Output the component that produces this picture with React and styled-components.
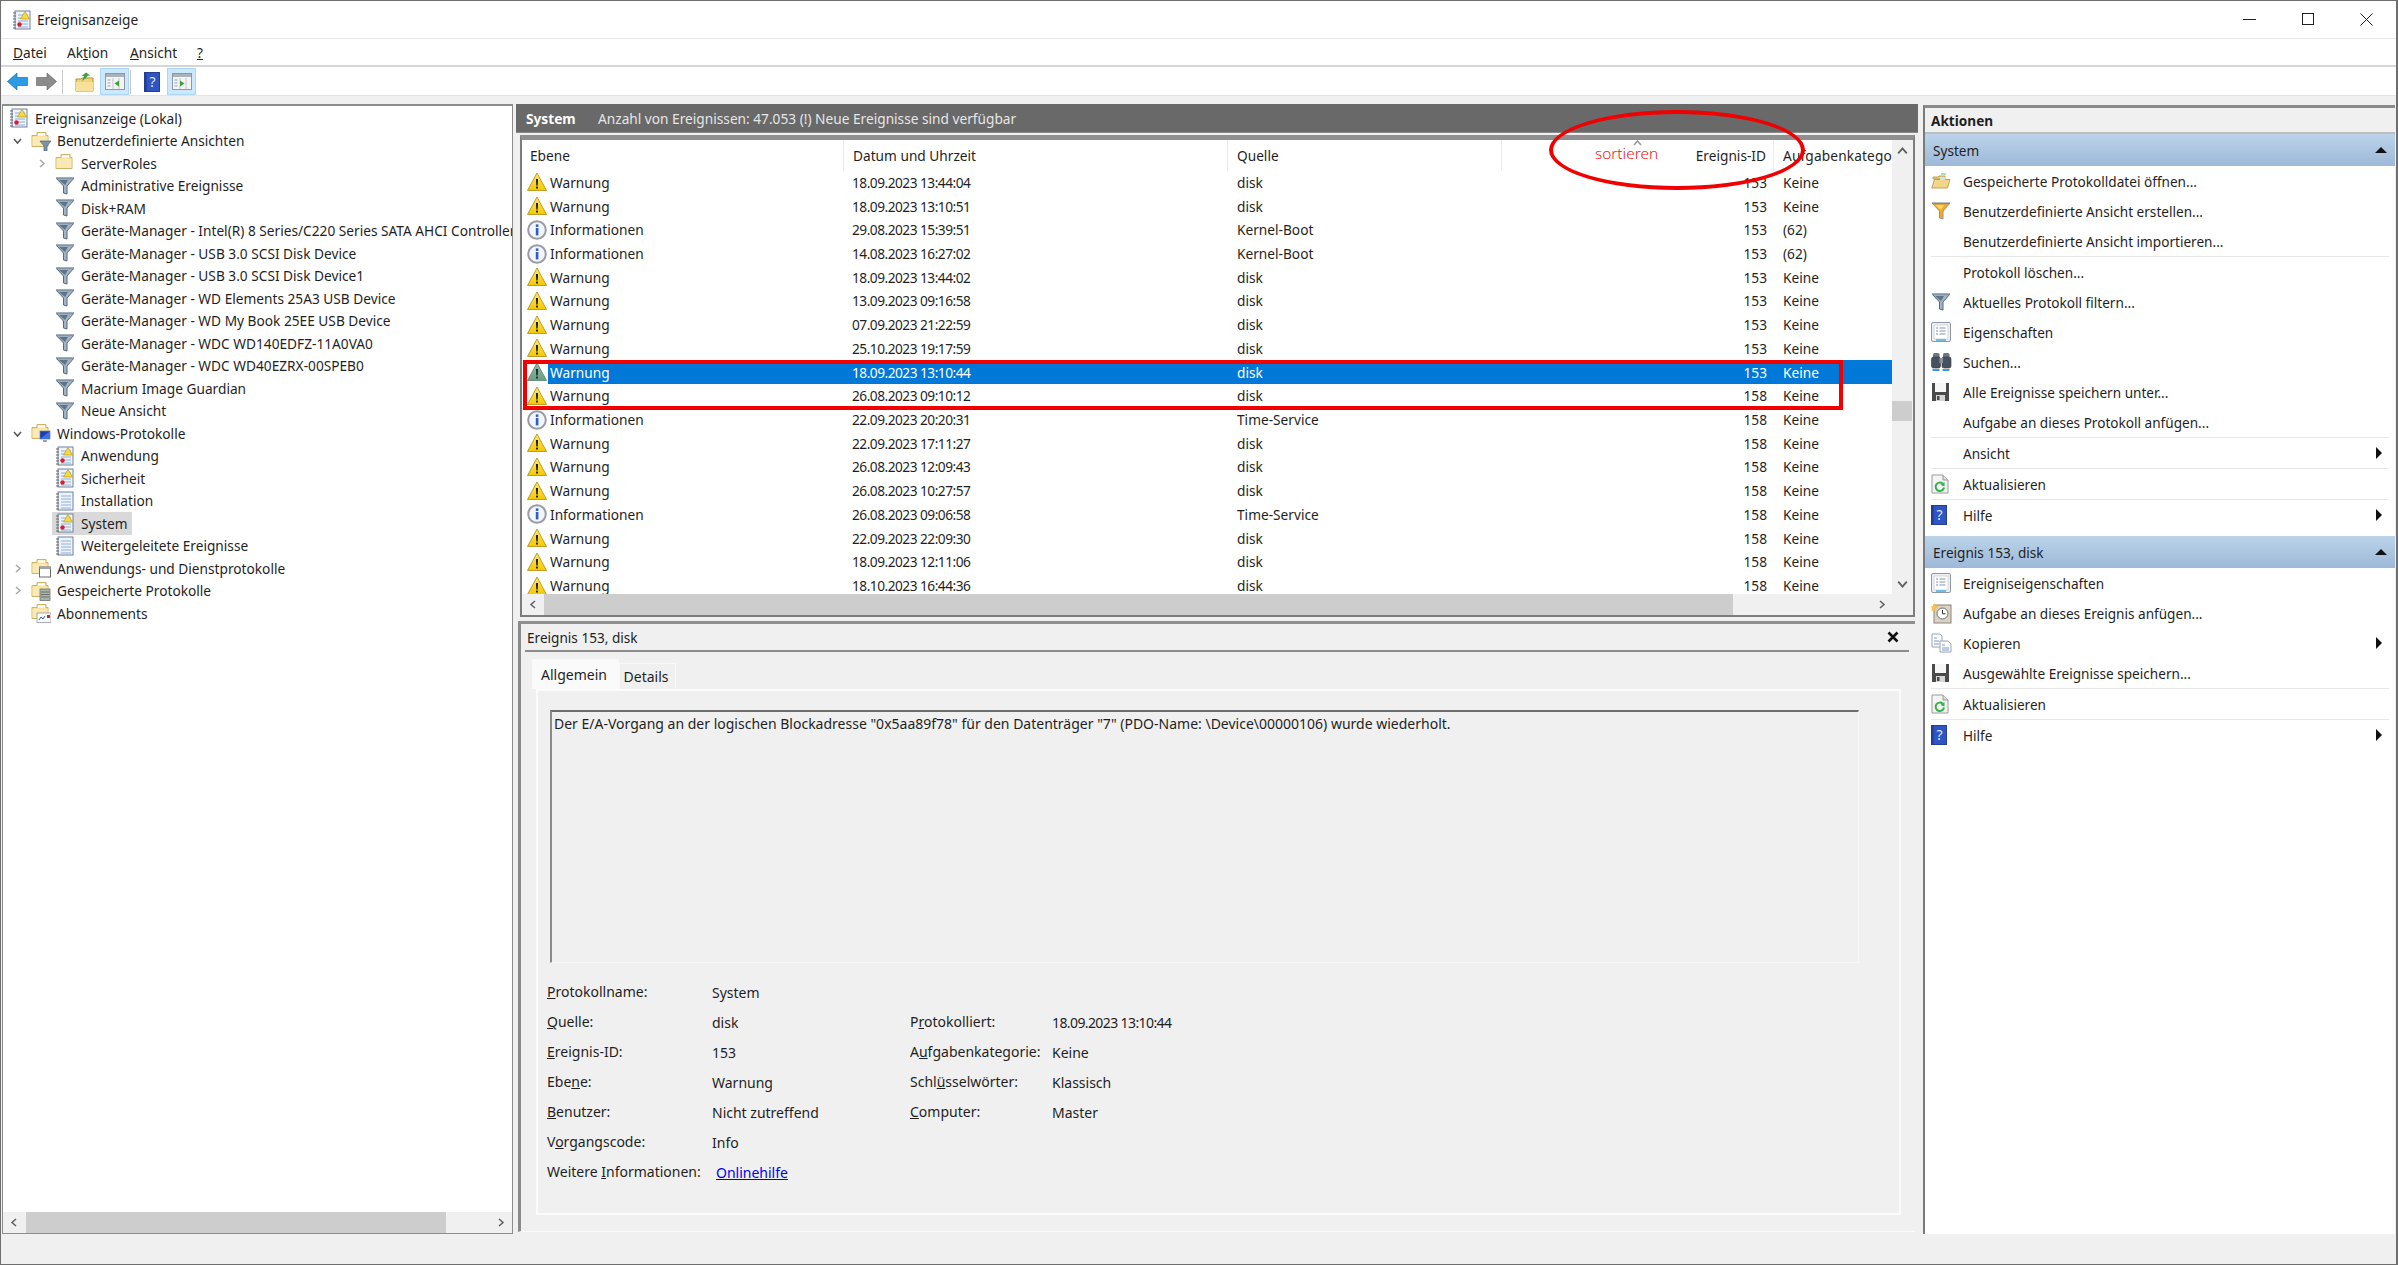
import React from "react";
import styled, { createGlobalStyle } from "styled-components";

const GlobalStyle = createGlobalStyle`
  html, body, #root { margin: 0; padding: 0; width: 100%; height: 100%; }
  body { overflow: hidden; background: #f0f0f0; color: #1f1f1f; font-family: "Noto Sans", "Open Sans", sans-serif; font-size: 13.7px; }
  * { box-sizing: border-box; }
`;

/* ---------- icons ---------- */

function LogIcon({ alert, size = 20 }) {
  return (
    <svg width={size} height={size} viewBox="0 0 20 20">
      <rect x="3" y="1" width="15" height="18" fill="#eef3fb" stroke="#6f839f" />
      <path d="M1 3h3M1 6h3M1 9h3M1 12h3M1 15h3M1 18h3" stroke="#666" strokeWidth="1.2" />
      <path d="M6 5h10M6 8h10M6 11h10M6 14h10M6 17h10" stroke="#8fb0d8" strokeWidth="1" />
      {alert && <polygon points="13,1.5 17.5,9 8.5,9" fill="#fbd93c" stroke="#b99a1f" strokeWidth="0.7" />}
      {alert && <circle cx="7.5" cy="14.5" r="2.2" fill="#d3202f" />}
    </svg>
  );
}

function FolderIcon({ kind }) {
  return (
    <svg width="20" height="20" viewBox="0 0 20 20">
      <path d="M1 4.5h5l0-3h9v3h2v11H1z" fill="#f7e3a0" stroke="#c9ab58" strokeWidth="0.9" />
      <path d="M7 2.5h7v2H7z" fill="#fff" />
      <path d="M1.5 6h15v9h-15z" fill="#f9e9b4" />
      {kind === "filter" && (
        <polygon points="9,10 20,10 16,15 16,20 13,20 13,15" fill="#7d93a8" stroke="#4f6477" strokeWidth="0.7" />
      )}
      {kind === "monitor" && (
        <g>
          <rect x="9" y="8" width="10" height="8" fill="#1b3db0" stroke="#6a7f9c" strokeWidth="0.7" />
          <path d="M12 17h4v2h-4z" fill="#9aa4b2" />
          <path d="M9 16L19 8v8z" fill="#3f6fe0" />
        </g>
      )}
      {kind === "window" && (
        <g>
          <rect x="8.5" y="9" width="11" height="10" fill="#fff" stroke="#6d6d6d" />
          <path d="M8.5 9h11v2h-11z" fill="#9aa4b2" />
        </g>
      )}
      {kind === "logs" && (
        <g>
          <rect x="9" y="8" width="10" height="11.5" fill="#a8b2a8" stroke="#6b746f" strokeWidth="0.8" />
          <path d="M10 11h8M10 13.5h8M10 16h8" stroke="#6b746f" />
        </g>
      )}
      {kind === "subs" && (
        <g>
          <rect x="6" y="10" width="14" height="9.5" fill="#fff" stroke="#8f9aa8" strokeWidth="0.8" />
          <path d="M8 17l2-3 2 2 2-3" stroke="#2a5fc0" fill="none" />
          <rect x="16" y="12" width="3" height="3" fill="#d3202f" />
        </g>
      )}
    </svg>
  );
}

function Funnel({ orange }) {
  return (
    <svg width="20" height="20" viewBox="0 0 20 20">
      <polygon
        points="1,2 19,2 12,10 12,18 8.5,17 8.5,10"
        fill={orange ? "#f6a91f" : "#a3b5c5"}
        stroke={orange ? "#8a95a0" : "#566b7d"}
        strokeWidth="1"
      />
      <polygon points="4,4 13,4 10,9" fill={orange ? "#ffd35e" : "#5e7488"} />
      <path d="M1 2.5h18" stroke={orange ? "#7f8d9a" : "#7f95a8"} strokeWidth="1.4" />
    </svg>
  );
}

function WarningIcon({ selected }) {
  const id = selected ? "warnSel" : "warn";
  return (
    <svg width="20" height="20" viewBox="0 0 20 20">
      <defs>
        <linearGradient id={id} x1="0" y1="0" x2="0" y2="1">
          <stop offset="0" stopColor={selected ? "#8fb8a0" : "#ffe96a"} />
          <stop offset="1" stopColor={selected ? "#6c9e86" : "#f4c800"} />
        </linearGradient>
      </defs>
      <polygon points="10,1 19.5,18.5 0.5,18.5" fill={`url(#${id})`} stroke={selected ? "#5f8a76" : "#b4951c"} strokeWidth="0.9" />
      <path d="M9 7h2l-.3 6.5h-1.4z" fill={selected ? "#123" : "#111"} />
      <rect x="9.1" y="14.6" width="1.8" height="1.9" fill={selected ? "#123" : "#111"} />
    </svg>
  );
}

function InfoIcon() {
  return (
    <svg width="20" height="20" viewBox="0 0 20 20">
      <circle cx="10" cy="10" r="8.8" fill="#f2f5fb" stroke="#9a9ca2" strokeWidth="2" />
      <rect x="8.8" y="8" width="2.6" height="7.4" fill="#2b5dc4" />
      <rect x="8.8" y="4.4" width="2.6" height="2.5" fill="#2b5dc4" />
    </svg>
  );
}

function HelpIcon({ w = 16, h = 20 }) {
  return (
    <svg width={w} height={h} viewBox="0 0 16 20">
      <rect x="0.5" y="0.5" width="15" height="19" fill="#2f55c4" stroke="#27408c" />
      <rect x="0.5" y="0.5" width="2" height="19" fill="#1f3c96" />
      <text x="8.5" y="15" fontSize="14" fontFamily="Noto Sans, sans-serif" fill="#dfe6ff" textAnchor="middle">?</text>
    </svg>
  );
}

function PaneToggle({ mirrored }) {
  return (
    <svg width="20" height="17" viewBox="0 0 20 17">
      <rect x="0.5" y="0.5" width="19" height="16" fill="#f4f4f4" stroke="#8f98a0" />
      <path d="M1 1h18v3H1z" fill="#aab3bb" />
      <path d="M8 5v11M14 5v11" stroke="#c2c8ce" />
      {mirrored ? (
        <polygon points="8,7.5 12.5,10.5 8,13.5" fill="#3aa33a" />
      ) : (
        <polygon points="14,7.5 9.5,10.5 14,13.5" fill="#3aa33a" />
      )}
      <path d="M2.5 7h3M2.5 10h3M2.5 13h3" stroke="#8fa6bd" />
    </svg>
  );
}

function FolderUp() {
  return (
    <svg width="20" height="20" viewBox="0 0 20 20">
      <path d="M1 7h5l1-1h11v13H1z" fill="#f0d278" stroke="#b1923f" />
      <path d="M1 10h17v9H1z" fill="#f7e19b" />
      <path d="M7 9l2-5H6.5L11 0.5l4.5 3H13l-2 2.5c-1 1-3 2-4 3z" fill="#3fa23a" />
    </svg>
  );
}

function NavArrow({ gray }) {
  return (
    <svg width="21" height="19" viewBox="0 0 21 19">
      {gray ? (
        <polygon points="20.5,9.5 11,1 11,5.5 0.5,5.5 0.5,13.5 11,13.5 11,18" fill="#8b8b8b" stroke="#6f6f6f" strokeWidth="0.7" />
      ) : (
        <polygon points="0.5,9.5 10,1 10,5.5 20.5,5.5 20.5,13.5 10,13.5 10,18" fill="#2b9be6" stroke="#1d6fb5" strokeWidth="0.7" />
      )}
    </svg>
  );
}

function Chevron({ dir = "right", color = "#5f5f5f", size = 9 }) {
  const paths = {
    right: "M3 1l4 3.5L3 8",
    left: "M6 1L2 4.5 6 8",
    up: "M1 6l3.5-4L8 6",
    down: "M1 3l3.5 4L8 3",
  };
  return (
    <svg width={size} height={size} viewBox="0 0 9 9">
      <path d={paths[dir]} fill="none" stroke={color} strokeWidth="1.5" />
    </svg>
  );
}

function FolderOpen() {
  return (
    <svg width="20" height="20" viewBox="0 0 20 20">
      <path d="M2 6h5l1-1h6v3H2z" fill="#e9cf85" stroke="#b1923f" strokeWidth="0.8" />
      <path d="M10 3h5" stroke="#5bc24f" />
      <path d="M3.5 8.5h15.5l-2.5 8.5H0.8z" fill="#f1d68a" stroke="#b1923f" strokeWidth="0.8" />
      <rect x="9" y="6" width="5" height="3" fill="#cfe3f5" />
    </svg>
  );
}

function PropsIcon() {
  return (
    <svg width="20" height="20" viewBox="0 0 20 20">
      <rect x="0.5" y="0.5" width="19" height="19" rx="1.5" fill="#eef0f3" stroke="#8f98a0" />
      <rect x="3" y="3" width="14" height="14" fill="#fff" stroke="#c3cad1" strokeWidth="0.7" />
      <path d="M5 6h2M5 9h2M5 12h2M8.5 6h6M8.5 9h6M8.5 12h6" stroke="#7f95ad" />
      <path d="M5 18h10" stroke="#3fb0e0" strokeWidth="1.5" />
    </svg>
  );
}

function Binoculars() {
  return (
    <svg width="21" height="20" viewBox="0 0 21 20">
      <rect x="2" y="1" width="6.5" height="5" rx="1.5" fill="#6b7785" />
      <rect x="12" y="1" width="6.5" height="5" rx="1.5" fill="#6b7785" />
      <rect x="0.5" y="5" width="9" height="11" rx="2" fill="#48525e" stroke="#2f3740" strokeWidth="0.6" />
      <rect x="11" y="5" width="9" height="11" rx="2" fill="#48525e" stroke="#2f3740" strokeWidth="0.6" />
      <rect x="8.5" y="6" width="3.5" height="5" fill="#8a94a0" />
      <path d="M1.5 18h7M11.5 18h7" stroke="#3d9be0" strokeWidth="2" />
    </svg>
  );
}

function Floppy() {
  return (
    <svg width="19" height="20" viewBox="0 0 19 20">
      <path d="M1 1h17v18H1z" fill="#4a4a4a" />
      <rect x="4" y="1" width="11" height="9" fill="#f6f6f6" />
      <rect x="5" y="13" width="9" height="6" fill="#d6d6d6" />
      <rect x="6" y="14" width="2.5" height="4" fill="#4a4a4a" />
    </svg>
  );
}

function RefreshDoc() {
  return (
    <svg width="18" height="20" viewBox="0 0 18 20">
      <path d="M1 1h11l5 5v13H1z" fill="#f4f4f4" stroke="#9a9a9a" />
      <path d="M12 1v5h5" fill="#ddd" stroke="#9a9a9a" />
      <path d="M13 13.5a4.2 4.2 0 1 1-1.3-3.8" fill="none" stroke="#33b24a" strokeWidth="2" />
      <polygon points="13.5,8 13.5,12.5 9.5,11" fill="#33b24a" />
    </svg>
  );
}

function TaskIcon() {
  return (
    <svg width="21" height="21" viewBox="0 0 21 21">
      <rect x="3" y="2" width="17" height="18" fill="#d9d3c4" stroke="#8a8578" />
      <circle cx="11.5" cy="10.5" r="5.5" fill="#fff" stroke="#6d6d6d" />
      <path d="M11.5 7v3.8h3" fill="none" stroke="#333" />
      <polygon points="3,0 4.5,3 8,3.5 5,5.5 5.5,8.5 3,7 0.5,8.5 1,5.5 0,3.5 2,3" fill="#f6c24a" />
    </svg>
  );
}

function CopyIcon() {
  return (
    <svg width="21" height="20" viewBox="0 0 21 20">
      <path d="M1 1h8l2 2v11H1z" fill="#fff" stroke="#9aa4b0" />
      <path d="M3 5h3M3 8h5M3 11h5" stroke="#6f9ad0" />
      <path d="M9 8h8l3 3v8H9z" fill="#fff" stroke="#9aa4b0" />
      <path d="M11 12h3M11 15h7M11 17h7" stroke="#6f9ad0" />
    </svg>
  );
}

/* ---------- data ---------- */

const treeRows = [
  { level: 0, label: "Ereignisanzeige (Lokal)", icon: <LogIcon alert /> },
  { level: 1, label: "Benutzerdefinierte Ansichten", icon: <FolderIcon kind="filter" />, arrow: "down" },
  { level: 2, label: "ServerRoles", icon: <FolderIcon />, arrow: "right" },
  { level: 2, label: "Administrative Ereignisse", icon: <Funnel /> },
  { level: 2, label: "Disk+RAM", icon: <Funnel /> },
  { level: 2, label: "Geräte-Manager - Intel(R) 8 Series/C220 Series SATA AHCI Controller", icon: <Funnel /> },
  { level: 2, label: "Geräte-Manager - USB 3.0 SCSI Disk Device", icon: <Funnel /> },
  { level: 2, label: "Geräte-Manager - USB 3.0 SCSI Disk Device1", icon: <Funnel /> },
  { level: 2, label: "Geräte-Manager - WD Elements 25A3 USB Device", icon: <Funnel /> },
  { level: 2, label: "Geräte-Manager - WD My Book 25EE USB Device", icon: <Funnel /> },
  { level: 2, label: "Geräte-Manager - WDC WD140EDFZ-11A0VA0", icon: <Funnel /> },
  { level: 2, label: "Geräte-Manager - WDC WD40EZRX-00SPEB0", icon: <Funnel /> },
  { level: 2, label: "Macrium Image Guardian", icon: <Funnel /> },
  { level: 2, label: "Neue Ansicht", icon: <Funnel /> },
  { level: 1, label: "Windows-Protokolle", icon: <FolderIcon kind="monitor" />, arrow: "down" },
  { level: 2, label: "Anwendung", icon: <LogIcon alert /> },
  { level: 2, label: "Sicherheit", icon: <LogIcon alert /> },
  { level: 2, label: "Installation", icon: <LogIcon /> },
  { level: 2, label: "System", icon: <LogIcon alert />, active: true },
  { level: 2, label: "Weitergeleitete Ereignisse", icon: <LogIcon /> },
  { level: 1, label: "Anwendungs- und Dienstprotokolle", icon: <FolderIcon kind="window" />, arrow: "right" },
  { level: 1, label: "Gespeicherte Protokolle", icon: <FolderIcon kind="logs" />, arrow: "right" },
  { level: 1, label: "Abonnements", icon: <FolderIcon kind="subs" /> },
];

const events = [
  ["w", "18.09.2023 13:44:04", "disk", "153", "Keine"],
  ["w", "18.09.2023 13:10:51", "disk", "153", "Keine"],
  ["i", "29.08.2023 15:39:51", "Kernel-Boot", "153", "(62)"],
  ["i", "14.08.2023 16:27:02", "Kernel-Boot", "153", "(62)"],
  ["w", "18.09.2023 13:44:02", "disk", "153", "Keine"],
  ["w", "13.09.2023 09:16:58", "disk", "153", "Keine"],
  ["w", "07.09.2023 21:22:59", "disk", "153", "Keine"],
  ["w", "25.10.2023 19:17:59", "disk", "153", "Keine"],
  ["w", "18.09.2023 13:10:44", "disk", "153", "Keine"],
  ["w", "26.08.2023 09:10:12", "disk", "158", "Keine"],
  ["i", "22.09.2023 20:20:31", "Time-Service", "158", "Keine"],
  ["w", "22.09.2023 17:11:27", "disk", "158", "Keine"],
  ["w", "26.08.2023 12:09:43", "disk", "158", "Keine"],
  ["w", "26.08.2023 10:27:57", "disk", "158", "Keine"],
  ["i", "26.08.2023 09:06:58", "Time-Service", "158", "Keine"],
  ["w", "22.09.2023 22:09:30", "disk", "158", "Keine"],
  ["w", "18.09.2023 12:11:06", "disk", "158", "Keine"],
  ["w", "18.10.2023 16:44:36", "disk", "158", "Keine"],
];

const systemActions = [
  { label: "Gespeicherte Protokolldatei öffnen...", icon: <FolderOpen /> },
  { label: "Benutzerdefinierte Ansicht erstellen...", icon: <Funnel orange /> },
  { label: "Benutzerdefinierte Ansicht importieren..." },
  { divider: true },
  { label: "Protokoll löschen..." },
  { label: "Aktuelles Protokoll filtern...", icon: <Funnel /> },
  { label: "Eigenschaften", icon: <PropsIcon /> },
  { label: "Suchen...", icon: <Binoculars /> },
  { label: "Alle Ereignisse speichern unter...", icon: <Floppy /> },
  { label: "Aufgabe an dieses Protokoll anfügen..." },
  { divider: true },
  { label: "Ansicht", more: true },
  { divider: true },
  { label: "Aktualisieren", icon: <RefreshDoc /> },
  { divider: true },
  { label: "Hilfe", icon: <HelpIcon />, more: true },
];

const eventActions = [
  { label: "Ereigniseigenschaften", icon: <PropsIcon /> },
  { label: "Aufgabe an dieses Ereignis anfügen...", icon: <TaskIcon /> },
  { label: "Kopieren", icon: <CopyIcon />, more: true },
  { label: "Ausgewählte Ereignisse speichern...", icon: <Floppy /> },
  { divider: true },
  { label: "Aktualisieren", icon: <RefreshDoc /> },
  { divider: true },
  { label: "Hilfe", icon: <HelpIcon />, more: true },
];

/* ---------- parts ---------- */

function ActionList({ items }) {
  return items.map((item, i) =>
    item.divider ? (
      <ActionDivider key={i} />
    ) : (
      <ActionRow key={i}>
        <ActionIcon>{item.icon}</ActionIcon>
        <span>{item.label}</span>
        {item.more && <MoreArrow />}
      </ActionRow>
    )
  );
}

export default function App() {
  return (
    <Window>
      <GlobalStyle />
      <TitleBar>
        <TitleIcon><LogIcon alert size={20} /></TitleIcon>
        <TitleText>Ereignisanzeige</TitleText>
        <WindowButtons>
          <WindowButton><svg width="13" height="13" viewBox="0 0 13 13"><path d="M0 6.5h13" stroke="#222" /></svg></WindowButton>
          <WindowButton><svg width="13" height="13" viewBox="0 0 13 13"><rect x="0.5" y="0.5" width="11" height="11" fill="none" stroke="#222" /></svg></WindowButton>
          <WindowButton><svg width="13" height="13" viewBox="0 0 13 13"><path d="M0.5 0.5l12 12M12.5 0.5l-12 12" stroke="#222" /></svg></WindowButton>
        </WindowButtons>
      </TitleBar>

      <MenuBar>
        <MenuItem $width={54}><u>D</u>atei</MenuItem>
        <MenuItem $width={63}>Ak<u>t</u>ion</MenuItem>
        <MenuItem $width={67}><u>A</u>nsicht</MenuItem>
        <MenuItem><u>?</u></MenuItem>
      </MenuBar>

      <Toolbar>
        <ToolButton $width={29}><NavArrow /></ToolButton>
        <ToolButton $width={29}><NavArrow gray /></ToolButton>
        <ToolSeparator />
        <ToolButton $width={36} $shift={6}><FolderUp /></ToolButton>
        <ToolButton $width={29} $active><PaneToggle /></ToolButton>
        <ToolSeparator />
        <ToolButton $width={35} $shift={4}><HelpIcon w={16} h={20} /></ToolButton>
        <ToolButton $width={29} $active><PaneToggle mirrored /></ToolButton>
      </Toolbar>

      <Body>
        <TreePanel>
          <TreeList>
            {treeRows.map((row) => (
              <TreeRow key={row.label} $level={row.level}>
                {row.level > 0 && (
                  <TreeArrow>{row.arrow && <Chevron dir={row.arrow} color={row.arrow === "down" ? "#555" : "#a8a8a8"} />}</TreeArrow>
                )}
                <TreeLabel $active={row.active}>
                  <TreeIcon>{row.icon}</TreeIcon>
                  <span>{row.label}</span>
                </TreeLabel>
              </TreeRow>
            ))}
          </TreeList>
          <HScroll>
            <ScrollArrow $w={23}><Chevron dir="left" /></ScrollArrow>
            <HThumb $w={420} />
            <HSpacer />
            <ScrollArrow $w={23}><Chevron dir="right" /></ScrollArrow>
          </HScroll>
        </TreePanel>

        <CenterPanel>
          <LogHeader>
            <LogTitle>System</LogTitle>
            <span>Anzahl von Ereignissen: 47.053 (!) Neue Ereignisse sind verfügbar</span>
          </LogHeader>

          <ListFrame>
            <ListMain>
              <ListViewport>
                <ColumnHeader>
                  <HeadCell $first>Ebene</HeadCell>
                  <HeadCell>Datum und Uhrzeit</HeadCell>
                  <HeadCell>Quelle</HeadCell>
                  <HeadCell $right>Ereignis-ID</HeadCell>
                  <HeadCell $last>Aufgabenkategorie</HeadCell>
                </ColumnHeader>
                {events.map((ev, i) => {
                  const selected = i === 8;
                  return (
                    <EventRow key={ev[1]} $selected={selected}>
                      <LevelCell>
                        {ev[0] === "w" ? <WarningIcon selected={selected} /> : <InfoIcon />}
                        <span>{ev[0] === "w" ? "Warnung" : "Informationen"}</span>
                      </LevelCell>
                      <Cell $tight>{ev[1]}</Cell>
                      <Cell>{ev[2]}</Cell>
                      <Cell $right>{ev[3]}</Cell>
                      <Cell>{ev[4]}</Cell>
                    </EventRow>
                  );
                })}
              </ListViewport>
              <HScroll>
                <ScrollArrow $w={22}><Chevron dir="left" /></ScrollArrow>
                <HThumb $w={1189} />
                <HSpacer />
                <ScrollArrow $w={22}><Chevron dir="right" /></ScrollArrow>
              </HScroll>
            </ListMain>
            <VScroll>
              <VArrow><Chevron dir="up" size={11} /></VArrow>
              <VThumb />
              <VSpacer />
              <VArrow><Chevron dir="down" size={11} /></VArrow>
              <VCorner />
            </VScroll>
          </ListFrame>

          <DetailPanel>
            <DetailHeader>
              <span>Ereignis 153, disk</span>
              <CloseX>
                <svg width="12" height="12" viewBox="0 0 12 12"><path d="M1.5 1.5l9 9M10.5 1.5l-9 9" stroke="#111" strokeWidth="2.6" /></svg>
              </CloseX>
            </DetailHeader>

            <Tabs>
              <Tab $active>Allgemein</Tab>
              <Tab>Details</Tab>
            </Tabs>

            <TabPane>
              <MessageBox>Der E/A-Vorgang an der logischen Blockadresse "0x5aa89f78" für den Datenträger "7" (PDO-Name: \Device\00000106) wurde wiederholt.</MessageBox>
              <FieldGrid>
                <FieldLabel><u>P</u>rotokollname:</FieldLabel>
                <FieldValue>System</FieldValue>
                <FieldLabel />
                <FieldValue />

                <FieldLabel><u>Q</u>uelle:</FieldLabel>
                <FieldValue>disk</FieldValue>
                <FieldLabel>P<u>r</u>otokolliert:</FieldLabel>
                <FieldValue $tight>18.09.2023 13:10:44</FieldValue>

                <FieldLabel><u>E</u>reignis-ID:</FieldLabel>
                <FieldValue>153</FieldValue>
                <FieldLabel>A<u>u</u>fgabenkategorie:</FieldLabel>
                <FieldValue>Keine</FieldValue>

                <FieldLabel>Ebe<u>n</u>e:</FieldLabel>
                <FieldValue>Warnung</FieldValue>
                <FieldLabel>Schl<u>ü</u>sselwörter:</FieldLabel>
                <FieldValue>Klassisch</FieldValue>

                <FieldLabel><u>B</u>enutzer:</FieldLabel>
                <FieldValue>Nicht zutreffend</FieldValue>
                <FieldLabel><u>C</u>omputer:</FieldLabel>
                <FieldValue>Master</FieldValue>

                <FieldLabel>V<u>o</u>rgangscode:</FieldLabel>
                <FieldValue>Info</FieldValue>
                <FieldLabel />
                <FieldValue />

                <FieldLabel>Weitere <u>I</u>nformationen:</FieldLabel>
                <FieldValue><HelpLink href="#">Onlinehilfe</HelpLink></FieldValue>
                <FieldLabel />
                <FieldValue />
              </FieldGrid>
            </TabPane>
          </DetailPanel>
        </CenterPanel>

        <ActionsPanel>
          <ActionsTitle>Aktionen</ActionsTitle>
          <SectionHeader>
            <span>System</span>
            <CollapseTriangle />
          </SectionHeader>
          <ActionList items={systemActions} />
          <SectionHeader $spaced>
            <span>Ereignis 153, disk</span>
            <CollapseTriangle />
          </SectionHeader>
          <ActionList items={eventActions} />
        </ActionsPanel>
      </Body>

      <StatusBar />

      <SortNote>sortieren</SortNote>
      <SortCaret><Chevron dir="up" size={9} color="#9a9a9a" /></SortCaret>
      <RedEllipse />
      <RedBox />
    </Window>
  );
}

/* ---------- styles ---------- */

const Window = styled.div`
  position: relative;
  width: 2398px;
  height: 1265px;
  border: 1px solid #6e6e6e;
  border-width: 1px 2px 1px 1px;
  display: flex;
  flex-direction: column;
  overflow: hidden;
  background: #f0f0f0;
`;

const TitleBar = styled.div`
  height: 38px;
  flex: none;
  display: flex;
  align-items: center;
  background: #fff;
  border-bottom: 1px solid #e6e6e6;
`;

const TitleIcon = styled.div`
  display: flex;
  margin-left: 11px;
`;

const TitleText = styled.div`
  margin-left: 5px;
`;

const WindowButtons = styled.div`
  margin-left: auto;
  display: flex;
`;

const WindowButton = styled.div`
  width: 58.6px;
  height: 38px;
  display: flex;
  align-items: center;
  justify-content: center;
`;

const MenuBar = styled.div`
  height: 28px;
  flex: none;
  display: flex;
  align-items: center;
  padding-left: 12px;
  background: #fff;
  border-bottom: 2px solid #d6d6d6;
`;

const MenuItem = styled.div`
  width: ${(p) => (p.$width ? `${p.$width}px` : "auto")};
`;

const Toolbar = styled.div`
  height: 29px;
  flex: none;
  display: flex;
  align-items: center;
  padding: 1px 0 0 2px;
  background: #fff;
  border-bottom: 1px solid #e4e4e4;
`;

const ToolButton = styled.div`
  width: ${(p) => p.$width}px;
  height: 27px;
  display: flex;
  align-items: center;
  justify-content: center;
  padding-left: ${(p) => p.$shift || 0}px;
  background: ${(p) => (p.$active ? "#cce8ff" : "transparent")};
  border: 1px solid ${(p) => (p.$active ? "#a9d7fb" : "transparent")};
`;

const ToolSeparator = styled.div`
  width: 1px;
  height: 24px;
  margin: 0 1px;
  background: #c8c8c8;
`;

const Body = styled.div`
  flex: 1;
  min-height: 0;
  display: flex;
  padding-top: 8px;
`;

const TreePanel = styled.div`
  width: 511px;
  flex: none;
  display: flex;
  flex-direction: column;
  margin-left: 1px;
  background: #fff;
  border: 1px solid #8c8c8c;
  border-top-width: 2px;
`;

const TreeList = styled.div`
  flex: 1;
  min-height: 0;
  padding-top: 1px;
  overflow: hidden;
`;

const TreeRow = styled.div`
  height: 22.5px;
  display: flex;
  align-items: center;
  white-space: nowrap;
  padding-left: ${(p) => [3, 7.5, 31.5][p.$level]}px;
`;

const TreeArrow = styled.div`
  width: 13px;
  flex: none;
  display: flex;
  justify-content: center;
  margin-right: 4.5px;
`;

const TreeLabel = styled.div`
  display: flex;
  align-items: center;
  height: 22.5px;
  padding-right: 4px;
  background: ${(p) => (p.$active ? "#d9d9d9" : "transparent")};
`;

const TreeIcon = styled.div`
  width: 29px;
  flex: none;
  display: flex;
  padding-left: 3px;
`;

const HScroll = styled.div`
  height: 21px;
  flex: none;
  display: flex;
  background: #f0f0f0;
`;

const ScrollArrow = styled.div`
  width: ${(p) => p.$w}px;
  display: flex;
  align-items: center;
  justify-content: center;
`;

const HThumb = styled.div`
  width: ${(p) => p.$w}px;
  background: #cdcdcd;
`;

const HSpacer = styled.div`
  flex: 1;
`;

const CenterPanel = styled.div`
  width: 1402px;
  flex: none;
  display: flex;
  flex-direction: column;
  margin-left: 3px;
`;

const LogHeader = styled.div`
  height: 29px;
  flex: none;
  display: flex;
  align-items: center;
  padding-left: 10px;
  background: #696969;
  color: #e6e6e6;
  border-bottom: 1px solid #8a8a8a;
`;

const LogTitle = styled.b`
  width: 72px;
  color: #fff;
`;

const ListFrame = styled.div`
  height: 482px;
  flex: none;
  display: flex;
  margin: 2px 3px 0 4px;
  border: 2px solid #7d7d7d;
  border-top-width: 5px;
  border-bottom-width: 2px;
  border-top-color: #8f8f8f;
`;

const ListMain = styled.div`
  width: 1370px;
  flex: none;
  display: flex;
  flex-direction: column;
`;

const ListViewport = styled.div`
  flex: 1;
  min-height: 0;
  overflow: hidden;
  background: #fff;
`;

const columns = "322px 384px 274px 272px 118px";

const ColumnHeader = styled.div`
  height: 30.5px;
  display: grid;
  grid-template-columns: ${columns};
  align-items: stretch;
`;

const HeadCell = styled.div`
  display: flex;
  align-items: center;
  justify-content: ${(p) => (p.$right ? "flex-end" : "flex-start")};
  padding: 0 7px 0 ${(p) => (p.$first ? 8 : 9)}px;
  border-right: ${(p) => (p.$last ? "none" : "1px solid #ececec")};
  letter-spacing: ${(p) => (p.$last ? "0.14px" : "normal")};
  white-space: nowrap;
  overflow: hidden;
`;

const EventRow = styled.div`
  height: 23.73px;
  display: grid;
  grid-template-columns: ${columns};
  align-items: center;
  white-space: nowrap;
  color: ${(p) => (p.$selected ? "#fff" : "inherit")};
  background: ${(p) => (p.$selected ? "linear-gradient(to right, transparent 26px, #0078d7 26px)" : "transparent")};
`;

const LevelCell = styled.div`
  display: flex;
  align-items: center;
  gap: 3px;
  padding-left: 5px;
`;

const Cell = styled.div`
  padding: 0 7px 0 ${(p) => (p.$tight ? 8 : 9)}px;
  text-align: ${(p) => (p.$right ? "right" : "left")};
  letter-spacing: ${(p) => (p.$tight ? "-0.5px" : "normal")};
`;

const VScroll = styled.div`
  width: 20px;
  flex: none;
  display: flex;
  flex-direction: column;
  background: #f0f0f0;
`;

const VArrow = styled.div`
  height: 22px;
  display: flex;
  align-items: center;
  justify-content: center;
`;

const VThumb = styled.div`
  height: 20px;
  margin-top: 239px;
  background: #cdcdcd;
`;

const VSpacer = styled.div`
  flex: 1;
`;

const VCorner = styled.div`
  height: 21px;
  flex: none;
`;

const DetailPanel = styled.div`
  flex: 1;
  min-height: 0;
  display: flex;
  flex-direction: column;
  font-size: 14px;
  margin: 4px 3px 2px 2px;
  border-top: 3px solid #8f8f8f;
  border-left: 3px solid #8a8a8a;
  border-bottom: 1px solid #fafafa;
`;

const DetailHeader = styled.div`
  height: 28px;
  flex: none;
  display: flex;
  align-items: center;
  justify-content: space-between;
  margin: 0 6px 0 4px;
  padding: 0 10px 0 2px;
  font-size: 13.6px;
  border-bottom: 2px solid #8c8c8c;
`;

const CloseX = styled.div`
  display: flex;
`;

const Tabs = styled.div`
  display: flex;
  align-items: flex-end;
  height: 37px;
  padding-left: 11px;
`;

const Tab = styled.div`
  height: ${(p) => (p.$active ? 30 : 26)}px;
  width: ${(p) => (p.$active ? 87 : 57)}px;
  display: flex;
  align-items: center;
  justify-content: center;
  padding-right: 3px;
  background: ${(p) => (p.$active ? "#fafafa" : "#f0f0f0")};
  border: 1px solid #f8f8f8;
  border-bottom: none;
`;

const TabPane = styled.div`
  height: 526px;
  margin: 0 14px 0 15px;
  padding: 19px 40px 0 12px;
  border: 2px solid #fbfbfb;
`;

const MessageBox = styled.div`
  height: 253px;
  padding: 2px 2px;
  border: 1px solid #f7f7f7;
  border-top: 2px solid #6f6f6f;
  border-left: 2px solid #8a8a8a;
`;

const FieldGrid = styled.div`
  display: grid;
  grid-template-columns: 165px 198px 142px 1fr;
  grid-auto-rows: 30px;
  margin: 15px 0 0 -3px;
`;

const FieldLabel = styled.div`
  white-space: nowrap;
  line-height: 28px;
`;

const FieldValue = styled.div`
  white-space: nowrap;
  line-height: 30px;
  letter-spacing: ${(p) => (p.$tight ? "-0.6px" : "normal")};
`;

const HelpLink = styled.a`
  margin-left: 4px;
  color: #0000ee;
  text-decoration: underline;
`;

const ActionsPanel = styled.div`
  flex: 1;
  min-width: 0;
  margin: 1px 1px 0 5px;
  border-left: 2px solid #7a7a7a;
  border-top: 3px solid #8a8a8a;
  font-size: 13.6px;
  background: #fff;
`;

const ActionsTitle = styled.div`
  height: 26px;
  display: flex;
  align-items: center;
  padding-left: 6px;
  font-weight: 700;
  background: #f0f0f0;
  border-bottom: 2px solid #bdbdbd;
`;

const SectionHeader = styled.div`
  height: 32px;
  display: flex;
  align-items: center;
  justify-content: space-between;
  padding: 0 8px;
  margin-top: ${(p) => (p.$spaced ? 6 : 0)}px;
  background: linear-gradient(to bottom, #bcd3ea, #9db9d8);
`;

const CollapseTriangle = styled.div`
  width: 0;
  height: 0;
  border-left: 6px solid transparent;
  border-right: 6px solid transparent;
  border-bottom: 6px solid #111;
`;

const ActionRow = styled.div`
  height: 30px;
  display: flex;
  align-items: center;
  padding-right: 13px;
  white-space: nowrap;
`;

const ActionIcon = styled.div`
  width: 38px;
  flex: none;
  display: flex;
  padding-left: 6px;
`;

const MoreArrow = styled.div`
  margin-left: auto;
  width: 0;
  height: 0;
  border-top: 6px solid transparent;
  border-bottom: 6px solid transparent;
  border-left: 6px solid #111;
`;

const ActionDivider = styled.div`
  height: 1px;
  margin: 0 6px;
  background: #e8e8e8;
`;

const StatusBar = styled.div`
  height: 30px;
  flex: none;
  background: #f0f0f0;
`;

const SortNote = styled.div`
  position: absolute;
  left: 1594px;
  top: 142px;
  color: #f01010;
  font-size: 15.4px;
  font-weight: 300;
  line-height: 22px;
`;

const SortCaret = styled.div`
  position: absolute;
  left: 1632px;
  top: 138px;
  display: flex;
`;

const RedEllipse = styled.div`
  position: absolute;
  left: 1548px;
  top: 109px;
  width: 256px;
  height: 80px;
  border: 4px solid #f00000;
  border-radius: 50%;
`;

const RedBox = styled.div`
  position: absolute;
  left: 522px;
  top: 359px;
  width: 1320px;
  height: 50px;
  border: 4px solid #f00000;
`;
